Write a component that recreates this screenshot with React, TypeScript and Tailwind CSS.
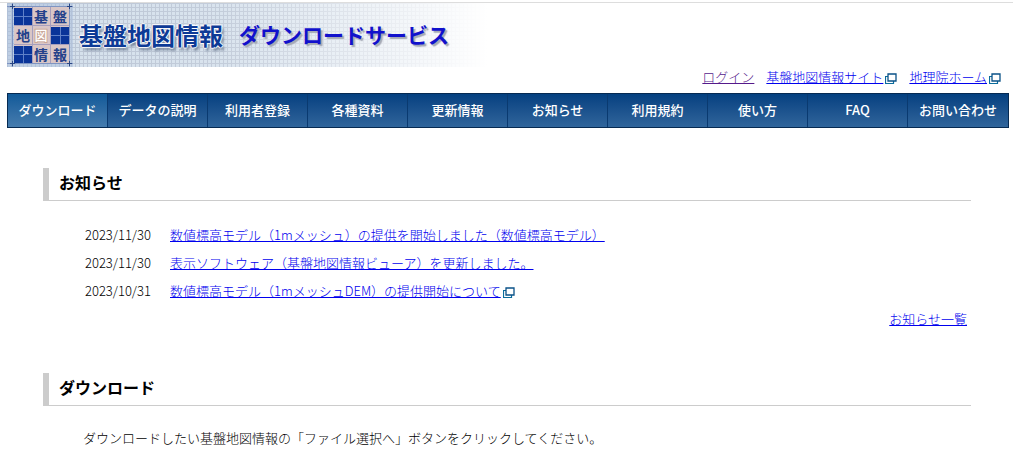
const navItems = [
  'ダウンロード',
  'データの説明',
  '利用者登録',
  '各種資料',
  '更新情報',
  'お知らせ',
  '利用規約',
  '使い方',
  'FAQ',
  'お問い合わせ',
]

const news = [
  { date: '2023/11/30', title: '数値標高モデル（1mメッシュ）の提供を開始しました（数値標高モデル）' },
  { date: '2023/11/30', title: '表示ソフトウェア（基盤地図情報ビューア）を更新しました。' },
  { date: '2023/10/31', title: '数値標高モデル（1mメッシュDEM）の提供開始について', external: true },
]

function ExternalIcon() {
  return (
    <svg className="inline-block ml-0.5 mt-0.5 shrink-0" width="12" height="11" viewBox="0 0 12 11" aria-hidden="true">
      <path d="M3 3.500H.500V10.500H8.500V8" fill="none" stroke="#0a6c9c" strokeWidth="1.2" />
      <path d="M3 1H11V8H3Z" fill="#fff" stroke="#0a5288" strokeWidth="1.3" />
    </svg>
  )
}

function Logo() {
  const blocks = [
    [7, 5],
    [44, 24],
    [7, 43],
  ]
  const chars = [
    ['基', 34, 19],
    ['盤', 53, 19],
    ['地', 16, 38],
    ['情', 34, 57],
    ['報', 53, 57],
  ] as const
  return (
    <svg width="66" height="64" viewBox="0 0 66 64" className="shrink-0" aria-label="基盤地図情報">
      <rect width="66" height="64" fill="#a9bddb" opacity=".5" />
      <rect x="7" y="4" width="55" height="56" fill="#d9c6c6" />
      {blocks.map(([x, y]) => (
        <g key={`${x}-${y}`}>
          <rect x={x} y={y} width="18" height="17" fill="#0a3499" />
          <path d={`M${x + 9.5} ${y}v17M${x} ${y + 8.5}h18`} stroke="#5f80c8" />
        </g>
      ))}
      <path d="M25.500 4v56M43.500 4v56M7 22.500h55M7 41.500h55" stroke="#a79fbd" />
      <path d="M5.500 0v64M62.500 0v64M0 3.500h66M0 60.500h66" stroke="#7f95c2" />
      <path d="M5.500 1v5M3 3.500h5M62.500 1v5M60 3.500h5M5.500 58v5M3 60.500h5M62.500 58v5M60 60.500h5" stroke="#2a4684" />
      {chars.map(([c, x, y]) => (
        <text key={c} x={x} y={y} textAnchor="middle" fontSize="14" fontWeight="700" fill="#23408a">
          {c}
        </text>
      ))}
      <text x="34" y="37" textAnchor="middle" fontSize="13" fontWeight="500" fill="#fff" stroke="#c9a798" strokeWidth="2" paintOrder="stroke">
        図
      </text>
    </svg>
  )
}

function Banner() {
  return (
    <div className="relative h-16 max-w-[480px]">
      <svg className="absolute inset-0" width="100%" height="100%" aria-hidden="true">
        <defs>
          <pattern id="mesh" width="4" height="4" patternUnits="userSpaceOnUse">
            <path d="M0 .5H4M.5 0V4" stroke="#b9c4d4" strokeWidth="1" />
          </pattern>
          <linearGradient id="fade">
            <stop offset="0" stopColor="#fff" stopOpacity="0" />
            <stop offset=".45" stopColor="#fff" stopOpacity=".15" />
            <stop offset="1" stopColor="#fff" />
          </linearGradient>
        </defs>
        <rect width="100%" height="100%" fill="#d3dfeb" />
        <rect width="100%" height="100%" fill="url(#mesh)" />
        <rect width="100%" height="100%" fill="url(#fade)" />
      </svg>
      <div className="relative flex items-center h-full whitespace-nowrap font-bold">
        <Logo />
        <h1 className="flex items-center ml-1.5">
          <span className="w-40 text-2xl text-[#0d3a96] [text-shadow:1px_0_1px_#fff,-1px_0_1px_#fff,0_1px_1px_#fff,0_-1px_1px_#fff,2px_3px_3px_#68778f]">
            基盤地図情報
          </span>
          <span className="text-[21px] text-[#1111cc] [text-shadow:2px_2px_1px_#a5a9b5]">ダウンロードサービス</span>
        </h1>
      </div>
    </div>
  )
}

function SectionTitle({ children }: { children: string }) {
  return (
    <h2 className="border-l-6 border-b border-[#ccc] pl-2.5 h-[33px] leading-7 text-base font-bold text-black">
      {children}
    </h2>
  )
}

export default function App() {
  return (
    <div className="pt-0.5 text-[13px] text-black font-light bg-white font-['Noto_Sans_CJK_JP',sans-serif]">
      <header className="border-t border-[#ddd]">
        <div className="pl-[7px] pr-1">
          <Banner />
          <div className="flex justify-end gap-3 h-[26px] pr-2 leading-5">
            <a href="#login" className="underline text-[#551a8b]">ログイン</a>
            <span className="flex items-center h-5">
              <a href="#site" className="underline text-[#0000ee]">基盤地図情報サイト</a>
              <ExternalIcon />
            </span>
            <span className="flex items-center h-5">
              <a href="#gsi" className="underline text-[#0000ee]">地理院ホーム</a>
              <ExternalIcon />
            </span>
          </div>
          <nav className="grid grid-cols-10 border border-[#062a52] bg-linear-to-b from-[#044080] to-[#30659b]">
            {navItems.map((item, i) => (
              <a
                key={item}
                href={`#nav-${i}`}
                className={`h-[33px] leading-8 text-center text-white font-medium whitespace-nowrap ${
                  i < navItems.length - 1 ? 'border-r border-[#0a3a70]' : ''
                } ${i === 0 ? 'bg-linear-to-b from-[#0f5a99] to-[#457cae]' : ''}`}
              >
                {item}
              </a>
            ))}
          </nav>
        </div>
      </header>

      <main className="pl-[43px] pr-[42px]">
        <section className="pt-10">
          <SectionTitle>お知らせ</SectionTitle>
          <ul className="pt-5 pl-[42px] leading-7">
            {news.map((item) => (
              <li key={item.title} className="flex">
                <span className="w-[85px] shrink-0">{item.date}</span>
                <span className="flex items-center">
                  <a href="#news" className="underline text-[#0000ee]">{item.title}</a>
                  {item.external && <ExternalIcon />}
                </span>
              </li>
            ))}
          </ul>
          <p className="text-right pr-1 leading-7">
            <a href="#list" className="underline text-[#0000ee]">お知らせ一覧</a>
          </p>
        </section>

        <section className="pt-10">
          <SectionTitle>ダウンロード</SectionTitle>
          <p className="pt-5 pl-10 leading-6">
            ダウンロードしたい基盤地図情報の「ファイル選択へ」ボタンをクリックしてください。
          </p>
        </section>
      </main>
    </div>
  )
}
